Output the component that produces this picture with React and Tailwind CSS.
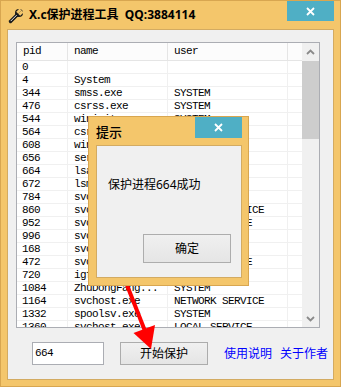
import React from "react";

const rows = [
  ["0", "", ""],
  ["4", "System", ""],
  ["344", "smss.exe", "SYSTEM"],
  ["476", "csrss.exe", "SYSTEM"],
  ["544", "wininit.exe", "SYSTEM"],
  ["564", "csrss.exe", "SYSTEM"],
  ["608", "winlogon.exe", "SYSTEM"],
  ["656", "services.exe", "SYSTEM"],
  ["664", "lsass.exe", "SYSTEM"],
  ["672", "lsm.exe", "SYSTEM"],
  ["784", "svchost.exe", "SYSTEM"],
  ["860", "svchost.exe", "NETWORK SERVICE"],
  ["952", "svchost.exe", "LOCAL SERVICE"],
  ["996", "svchost.exe", "SYSTEM"],
  ["168", "svchost.exe", "SYSTEM"],
  ["472", "svchost.exe", "LOCAL SERVICE"],
  ["720", "igfxCUIServi...", "SYSTEM"],
  ["1084", "ZhuDongFang...", "SYSTEM"],
  ["1164", "svchost.exe", "NETWORK SERVICE"],
  ["1332", "spoolsv.exe", "SYSTEM"],
  ["1360", "svchost.exe", "LOCAL SERVICE"],
];

function Wrench() {
  return (
    <svg width="16" height="16" viewBox="0 0 16 16">
      <path d="M2.5 13.5 L9 7" stroke="#1a1a1a" strokeWidth="3.4" strokeLinecap="round" />
      <circle cx="11" cy="5" r="4" fill="#1a1a1a" />
      <polygon points="10.2,5.8 13.6,2.4 15.6,4.4 12.2,7.8" fill="#f4c66b" />
      <polygon points="10.2,5.8 13.6,2.4 11.6,0.4 8.2,3.8" fill="#f4c66b" />
      <path d="M3 12.8 L8.4 7.4" stroke="#ffffff" strokeWidth="0.9" strokeLinecap="round" />
    </svg>
  );
}

function CloseBtn({ h }) {
  return (
    <div className={`w-[47px] ${h} bg-[#4fafc5] flex items-center justify-center`}>
      <svg width="9" height="9" viewBox="0 0 9 9">
        <path d="M1 1 L8 8 M8 1 L1 8" stroke="#ffffff" strokeWidth="1.8" />
      </svg>
    </div>
  );
}

const mono = "font-['Liberation_Mono',monospace] text-[11px] tracking-[-0.6px] text-black";
const cjk = "font-['Noto_Sans','Noto_Sans_CJK_SC',sans-serif]";

export default function App() {
  return (
    <div className="relative w-[341px] h-[387px] bg-[#f4c66b] border border-[#d8a650] flex flex-col overflow-hidden">
      {/* title bar */}
      <div className="h-[28px] flex items-start px-[6px]">
        <div className="mt-[7px] ml-[1px]">
          <Wrench />
        </div>
        <div className={`${cjk} ml-[5px] mt-[5px] text-[12px] font-bold text-black leading-[18px] whitespace-pre`}>
          X.c保护进程工具  QQ:3884114
        </div>
        <div className="ml-auto">
          <CloseBtn h="h-[20px]" />
        </div>
      </div>
      {/* client */}
      <div className="mx-[6px] mb-[6px] flex-1 bg-[#f0f0f0] border border-[#d3ab62] flex flex-col">
        {/* list */}
        <div className="ml-[8px] mt-[12px] w-[304px] h-[286px] border border-[#abadb3] bg-white flex overflow-hidden">
          <div className="w-[285px] flex flex-col">
            <div className={`${mono} h-[18px] shrink-0 grid grid-cols-[51px_100px_120px_14px] border-b border-[#e5e5e5] bg-[#fcfcfc]`}>
              <div className="pl-[6px] border-r border-[#e5e5e5] leading-[17px]">pid</div>
              <div className="pl-[6px] border-r border-[#e5e5e5] leading-[17px]">name</div>
              <div className="pl-[6px] border-r border-[#e5e5e5] leading-[17px]">user</div>
              <div />
            </div>
            {rows.map((r, i) => (
              <div
                key={i}
                className={`${mono} h-[13px] shrink-0 grid grid-cols-[51px_100px_120px_14px] border-b border-[#f0f0f0]`}
              >
                <div className="pl-[5px] border-r border-[#f0f0f0] leading-[12px] whitespace-pre overflow-hidden">{r[0]}</div>
                <div className="pl-[6px] border-r border-[#f0f0f0] leading-[12px] whitespace-pre overflow-hidden">{r[1]}</div>
                <div className="pl-[6px] border-r border-[#f0f0f0] leading-[12px] whitespace-pre overflow-hidden">{r[2]}</div>
                <div />
              </div>
            ))}
          </div>
          {/* scrollbar */}
          <div className="w-[17px] bg-[#f0f0f0] flex flex-col">
            <div className="h-[18px] flex items-center justify-center">
              <svg width="9" height="6" viewBox="0 0 9 6">
                <path d="M1 5 L4.5 1.5 L8 5" stroke="#8a8a8a" strokeWidth="1.8" fill="none" />
              </svg>
            </div>
            <div className="h-[78px] mx-[0px] bg-[#cdcdcd]" />
            <div className="flex-1" />
            <div className="h-[17px] flex items-center justify-center">
              <svg width="9" height="6" viewBox="0 0 9 6">
                <path d="M1 1 L4.5 4.5 L8 1" stroke="#8a8a8a" strokeWidth="1.8" fill="none" />
              </svg>
            </div>
          </div>
        </div>
        {/* bottom controls */}
        <div className="mt-[14px] flex items-center h-[23px]">
          <div className={`${mono} ml-[24px] w-[72px] h-[23px] bg-white border border-[#abadb3] pl-[2px] leading-[21px]`}>
            664
          </div>
          <div className={`${cjk} ml-[16px] w-[88px] h-[23px] border border-[#acacac] bg-gradient-to-b from-[#f0f0f0] to-[#e5e5e5] text-[12px] text-black flex items-center justify-center`}>
            开始保护
          </div>
          <div className={`${cjk} ml-[16px] text-[12px] text-[#0000ff]`}>使用说明</div>
          <div className={`${cjk} ml-[8px] text-[12px] text-[#0000ff]`}>关于作者</div>
        </div>
      </div>

      {/* red arrow */}
      <svg className="absolute left-[-1px] top-[-1px] pointer-events-none" width="341" height="387" viewBox="0 0 341 387">
        <path d="M125 280 L145 331" stroke="#ff0000" strokeWidth="4" />
        <polygon points="151,349 133.5,333 155,325" fill="#ff0000" />
      </svg>

      {/* dialog */}
      <div className="absolute left-[87px] top-[115px] w-[161px] h-[170px] bg-[#f4c66b] border border-[#d8a650] flex flex-col">
        <div className="h-[28px] flex items-start">
          <div className={`${cjk} ml-[7px] mt-[6px] text-[13px] font-medium text-black leading-[18px]`}>提示</div>
          <div className="ml-auto mr-[6px]">
            <CloseBtn h="h-[21px]" />
          </div>
        </div>
        <div className="mx-[7px] mb-[7px] ml-[7px] mr-[6px] flex-1 bg-[#f0f0f0] border border-[#d3ab62] flex flex-col">
          <div className={`${cjk} ml-[11px] mt-[31px] text-[12px] text-black leading-[16px]`}>保护进程664成功</div>
          <div className={`${cjk} ml-[46px] mt-[41px] w-[88px] h-[29px] border border-[#adadad] bg-gradient-to-b from-[#f0f0f0] to-[#e5e5e5] text-[12px] text-black flex items-center justify-center`}>
            确定
          </div>
        </div>
      </div>
    </div>
  );
}
